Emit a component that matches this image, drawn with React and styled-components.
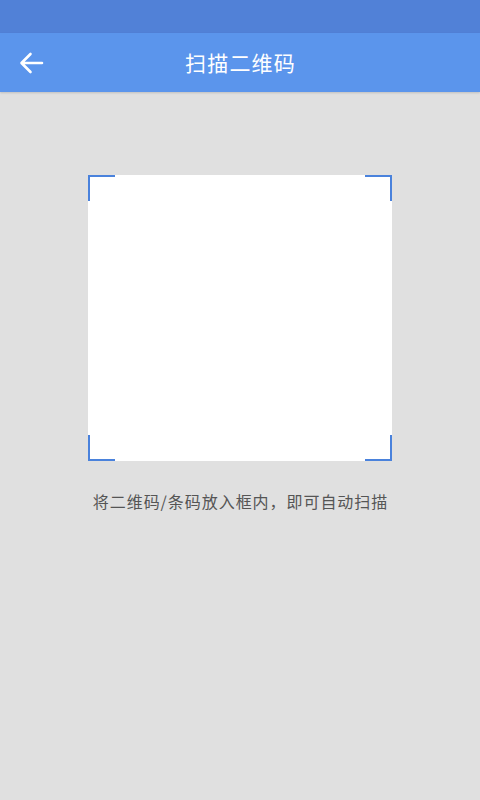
import React from "react";
import styled, { createGlobalStyle } from "styled-components";

const Global = createGlobalStyle`
  html, body { margin: 0; padding: 0; }
  body {
    width: 480px; height: 800px; overflow: hidden;
    background: #e0e0e0;
    font-family: "Noto Sans CJK SC", "Noto Sans", sans-serif;
  }
`;

const Page = styled.div`
  width: 480px;
  height: 800px;
  display: flex;
  flex-direction: column;
  background: #e0e0e0;
`;

const StatusBar = styled.div`
  height: 33px;
  background: #5181d7;
`;

const Toolbar = styled.div`
  height: 59px;
  background: #5b95ec;
  display: grid;
  grid-template-columns: 64px 1fr 64px;
  align-items: center;
  box-shadow: 0 1px 2px rgba(0, 0, 0, 0.15);
  position: relative;
  z-index: 1;
`;

const BackButton = styled.div`
  display: flex;
  align-items: center;
  padding-left: 19px;
`;

const Title = styled.div`
  color: #ffffff;
  font-size: 21px;
  text-align: center;
  letter-spacing: 1.2px;
  padding-left: 1px;
  margin-top: -2px;
`;

const Body = styled.div`
  display: flex;
  flex-direction: column;
  align-items: center;
  padding-top: 83px;
`;

const Frame = styled.div`
  position: relative;
  width: 304px;
  height: 286px;
  background: #ffffff;
`;

const Corner = styled.div`
  position: absolute;
  width: 25px;
  height: 24px;
  border-color: #4a82dc;
  border-style: solid;
  border-width: 0;
  ${(p) => (p.$top ? "top: 0; border-top-width: 2px;" : "bottom: 0; border-bottom-width: 2px;")}
  ${(p) => (p.$left ? "left: 0; border-left-width: 2px;" : "right: 0; border-right-width: 2px;")}
`;

const Hint = styled.div`
  margin-top: 28px;
  color: #555555;
  font-size: 16px;
  letter-spacing: 0.95px;
  padding-left: 1px;
`;

export default function App() {
  return (
    <Page>
      <Global />
      <StatusBar />
      <Toolbar>
        <BackButton>
          <svg width="25" height="22" viewBox="0 0 25 22" fill="none">
            <path d="M23 11H3M11.5 2L2.5 11l9 9" stroke="#ffffff" strokeWidth="2.6" strokeLinecap="round" strokeLinejoin="round" />
          </svg>
        </BackButton>
        <Title>扫描二维码</Title>
        <div />
      </Toolbar>
      <Body>
        <Frame>
          <Corner $top $left />
          <Corner $top />
          <Corner $left />
          <Corner />
        </Frame>
        <Hint>将二维码/条码放入框内，即可自动扫描</Hint>
      </Body>
    </Page>
  );
}
